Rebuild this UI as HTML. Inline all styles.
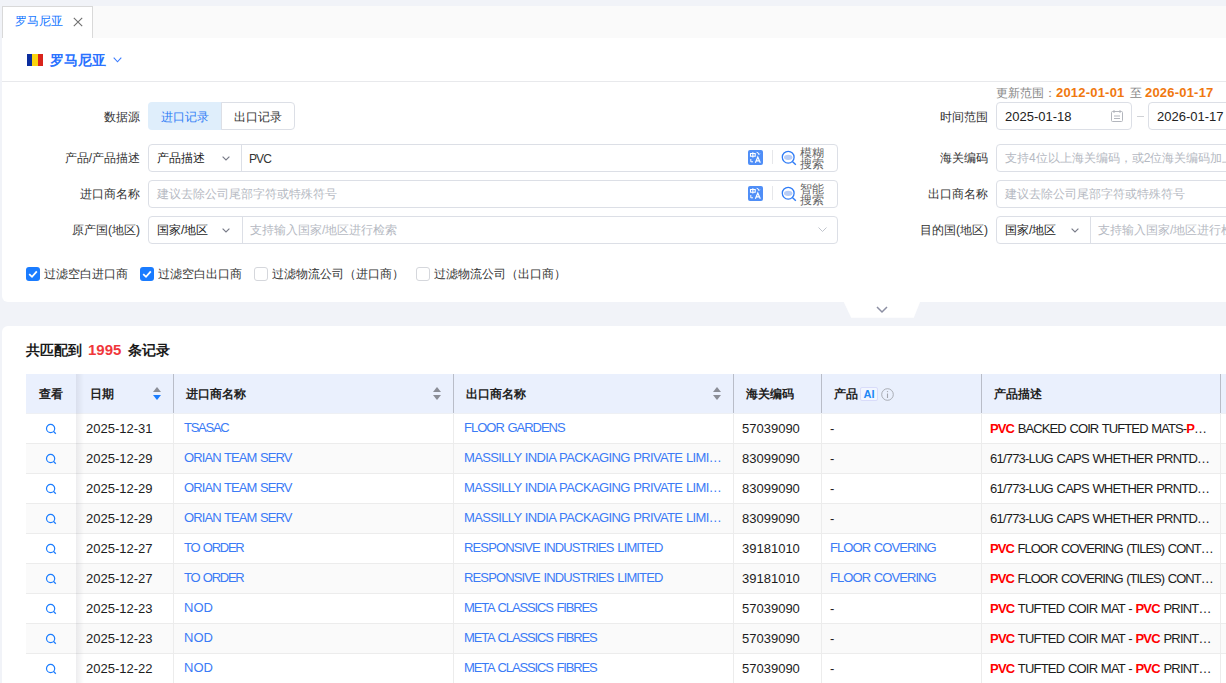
<!DOCTYPE html>
<html><head><meta charset="utf-8">
<style>
*{box-sizing:border-box;margin:0;padding:0}
html,body{width:1226px;height:683px;overflow:hidden;background:#f1f3f8;font-family:"Liberation Sans",sans-serif;font-size:12px;color:#222}
.a{position:absolute;white-space:nowrap}
#tabbar{position:absolute;left:2px;top:6px;width:1224px;height:32px;background:#fafafa}
#tab{position:absolute;left:2px;top:6px;width:91px;height:33px;background:#fff;border:1px solid #d9d9d9;border-bottom:none}
#card1{position:absolute;left:2px;top:38px;width:1230px;height:264px;background:#fff;border-radius:0 0 6px 6px}
#card2{position:absolute;left:2px;top:326px;width:1230px;height:357px;background:#fff;border-radius:6px 6px 0 0}
.lbl{position:absolute;text-align:right;width:120px;font-size:12px;color:#333;line-height:14px}
.box{position:absolute;border:1px solid #dcdfe6;border-radius:4px;background:#fff;height:28px}
.ph{color:#b5b9c2}
.chev{position:absolute;width:7px;height:7px;border-right:1px solid #999;border-bottom:1px solid #999;transform:rotate(45deg)}
.cb{position:absolute;width:14px;height:14px;border-radius:3px;top:267px}
.cb.on{background:#1a7cff}
.cb.off{border:1px solid #d5d7dc;background:#fff}
.chv{width:8px;height:5px}
.cbl{position:absolute;top:266px;font-size:12px;color:#333;line-height:16px}

.th,.tr{position:absolute;left:26px;width:1200px}
.th{top:374px;height:40px;background:#eaf0fd;border-bottom:1px solid #eef0f4}
.tr{height:30px}
.td,.hd{position:absolute;top:0;height:100%;white-space:nowrap;overflow:hidden}
.td{border-bottom:1px solid #ececec;border-right:1px solid #ececec;font-size:13px;line-height:29px;padding-left:10px;color:#1c1c1c}
.hd{height:39px;border-right:1px solid #b9bdc8;font-size:12px;font-weight:bold;line-height:40px;padding-left:12px;color:#222}
.c0{left:0;width:50px}.c1{left:50px;width:98px}.c2{left:148px;width:280px}.c3{left:428px;width:280px}
.c4{left:708px;width:88px}.c5{left:796px;width:160px}.c6{left:956px;width:239px}.c7{left:1195px;width:30px}
.td.c4,.td.c5,.td.c6{padding-left:8px}
.td.c2,.td.c3{line-height:27px}
.td.c5 .lk{position:relative;top:-1px}
.hd.c1{padding-left:14px}
.td.c0{text-align:center;padding:0;padding-top:9px;line-height:12px;border-right:none}
.hd.c0{text-align:center;padding:0;border-right:none}
.lk{color:#3b7bf6}
.r{color:#f00;font-weight:bold}
.shadow{position:absolute;left:76px;top:374px;width:8px;height:309px;background:linear-gradient(to right,rgba(0,0,30,0.07),rgba(0,0,30,0))}
.ai{position:absolute;left:38px;top:13px;width:18px;height:14px;border:1px solid #d9dcfa;border-radius:2px;background:#f2f6ff;font-size:11px;line-height:12px;text-align:center;color:#1e88f5;font-weight:bold}
.info{position:absolute;left:59px;top:14px}
.sort{position:absolute;top:13px;width:8px;height:13px}
</style></head><body>
<div id="tabbar"></div>
<div id="tab"></div>
<div class="a" style="left:15px;top:14px;font-size:12px;color:#1677ff;line-height:14px">罗马尼亚</div>
<svg class="a" style="left:73px;top:17px" width="10" height="10" viewBox="0 0 10 10"><path d="M0.8 0.8L9.2 9.2M9.2 0.8L0.8 9.2" stroke="#6f6f6f" stroke-width="1.1"/></svg>
<div id="card1"></div>
<!-- country header -->
<div class="a" style="left:27px;top:54px;width:16px;height:12px;display:flex">
<div style="width:5.33px;background:#0b2e9e"></div><div style="width:5.34px;background:#f9d40f"></div><div style="width:5.33px;background:#d9241b"></div></div>
<div class="a" style="left:50px;top:51px;font-size:14px;font-weight:bold;color:#2a72ff;line-height:18px">罗马尼亚</div>
<svg class="a" style="left:113px;top:57px" width="9" height="6" viewBox="0 0 9 6"><path d="M0.7 0.7L4.5 4.8L8.3 0.7" fill="none" stroke="#3a7bff" stroke-width="1.1"/></svg>
<div class="a" style="left:2px;top:81px;width:1224px;height:1px;background:#e8e9ec"></div>

<!-- row 1 -->
<div class="lbl" style="left:20px;top:110px">数据源</div>
<div class="a" style="left:148px;top:102px;width:74px;height:28px;background:#dfeefb;border-radius:4px 0 0 4px;color:#2f7df6;text-align:center;line-height:30px;font-size:12px">进口记录</div>
<div class="a" style="left:221px;top:102px;width:74px;height:28px;border:1px solid #dcdfe6;border-radius:0 4px 4px 0;color:#333;text-align:center;line-height:28px;font-size:12px">出口记录</div>

<div class="a" style="left:996px;top:86px;font-size:12px;color:#888;line-height:14px">更新范围：</div>
<div class="a" style="left:1056px;top:85px;font-size:13px;font-weight:bold;color:#f0780f;line-height:16px;letter-spacing:0.2px">2012-01-01</div>
<div class="a" style="left:1130px;top:86px;font-size:12px;color:#888;line-height:14px">至</div>
<div class="a" style="left:1145px;top:85px;font-size:13px;font-weight:bold;color:#f0780f;line-height:16px;letter-spacing:0.2px">2026-01-17</div>
<div class="lbl" style="left:868px;top:110px">时间范围</div>
<div class="box" style="left:996px;top:102px;width:136px"></div>
<div class="a" style="left:1005px;top:109px;font-size:13px;color:#222;line-height:16px">2025-01-18</div>
<svg class="a" style="left:1111px;top:110px" width="12" height="12" viewBox="0 0 12 12"><rect x="0.5" y="1.5" width="11" height="10" rx="1" fill="none" stroke="#b3b6bd"/><path d="M3 0V3M9 0V3M3 6H9M3 8.5H9" stroke="#b3b6bd"/></svg>
<div class="a" style="left:1137px;top:116px;width:7px;height:1px;background:#d0d2d6"></div>
<div class="box" style="left:1148px;top:102px;width:100px"></div>
<div class="a" style="left:1157px;top:109px;font-size:13px;color:#222;line-height:16px">2026-01-17</div>

<!-- row 2 -->
<div class="lbl" style="left:20px;top:151px">产品/产品描述</div>
<div class="box" style="left:148px;top:144px;width:690px"></div>
<div class="a" style="left:241px;top:145px;width:1px;height:26px;background:#dcdfe6"></div>
<div class="a" style="left:157px;top:151px;font-size:12px;line-height:14px">产品描述</div>
<svg class="a chv" style="left:222px;top:156px"><path d="M0.6 0.6L4 4L7.4 0.6" fill="none" stroke="#787b88" stroke-width="1.15"/></svg>
<div class="a" style="left:249px;top:152px;font-size:12px;line-height:14px;color:#333;letter-spacing:-0.9px">PVC</div>
<svg class="a" style="left:748px;top:150px" width="15" height="15" viewBox="0 0 15 15"><rect width="15" height="15" rx="2" fill="#4f8ef7"/><path d="M2.5 3.5H7.2V6.3H2.5Z M4.85 2.2V7.5" fill="none" stroke="#fff" stroke-width="1.1"/><path d="M8.6 2.3Q10.6 2.3 10.9 4.2M10 3.6L10.9 4.6L11.8 3.6" fill="none" stroke="#fff" stroke-width="0.9"/><path d="M2.8 9V11.8H5" fill="none" stroke="#fff" stroke-width="1"/><path d="M7.4 12.8L9.8 7L12.3 12.8M8.3 10.8H11.4" fill="none" stroke="#fff" stroke-width="1.2"/></svg>
<div class="a" style="left:772px;top:150px;width:1px;height:14px;background:#e6e7ea"></div>
<svg class="a" style="left:781px;top:150px" width="16" height="16" viewBox="0 0 16 16"><ellipse cx="7.2" cy="7.3" rx="4.2" ry="2.6" fill="#b7cdf6"/><circle cx="7.2" cy="7.2" r="5.9" fill="none" stroke="#2f7cf6" stroke-width="1.3"/><path d="M11.4 11.4L14.8 14.8" stroke="#2f7cf6" stroke-width="1.4"/></svg>
<div class="a" style="left:800px;top:147.5px;font-size:12px;line-height:11px;color:#666;white-space:normal;width:26px;letter-spacing:0">模糊<br>搜索</div>

<!-- row 3 -->
<div class="lbl" style="left:20px;top:187px">进口商名称</div>
<div class="box" style="left:148px;top:180px;width:690px"></div>
<div class="a ph" style="left:157px;top:187px;font-size:12px;line-height:14px">建议去除公司尾部字符或特殊符号</div>
<svg class="a" style="left:748px;top:186px" width="15" height="15" viewBox="0 0 15 15"><rect width="15" height="15" rx="2" fill="#4f8ef7"/><path d="M2.5 3.5H7.2V6.3H2.5Z M4.85 2.2V7.5" fill="none" stroke="#fff" stroke-width="1.1"/><path d="M8.6 2.3Q10.6 2.3 10.9 4.2M10 3.6L10.9 4.6L11.8 3.6" fill="none" stroke="#fff" stroke-width="0.9"/><path d="M2.8 9V11.8H5" fill="none" stroke="#fff" stroke-width="1"/><path d="M7.4 12.8L9.8 7L12.3 12.8M8.3 10.8H11.4" fill="none" stroke="#fff" stroke-width="1.2"/></svg>
<div class="a" style="left:772px;top:186px;width:1px;height:14px;background:#e6e7ea"></div>
<svg class="a" style="left:781px;top:186px" width="16" height="16" viewBox="0 0 16 16"><ellipse cx="7.2" cy="7.3" rx="4.2" ry="2.6" fill="#b7cdf6"/><circle cx="7.2" cy="7.2" r="5.9" fill="none" stroke="#2f7cf6" stroke-width="1.3"/><path d="M11.4 11.4L14.8 14.8" stroke="#2f7cf6" stroke-width="1.4"/></svg>
<div class="a" style="left:800px;top:183.5px;font-size:12px;line-height:11px;color:#666;white-space:normal;width:26px;letter-spacing:0">智能<br>搜索</div>

<!-- row 4 -->
<div class="lbl" style="left:20px;top:223px">原产国(地区)</div>
<div class="box" style="left:148px;top:216px;width:690px"></div>
<div class="a" style="left:242px;top:217px;width:1px;height:26px;background:#dcdfe6"></div>
<div class="a" style="left:157px;top:223px;font-size:12px;line-height:14px">国家/地区</div>
<svg class="a chv" style="left:222px;top:228px"><path d="M0.6 0.6L4 4L7.4 0.6" fill="none" stroke="#787b88" stroke-width="1.15"/></svg>
<div class="a ph" style="left:250px;top:223px;font-size:12px;line-height:14px">支持输入国家/地区进行检索</div>
<svg class="a" style="left:818px;top:227px" width="9" height="6"><path d="M0.5 0.5L4.5 4.5L8.5 0.5" fill="none" stroke="#c0c4cc"/></svg>

<!-- right rows -->
<div class="lbl" style="left:868px;top:151px">海关编码</div>
<div class="box" style="left:996px;top:144px;width:260px"></div>
<div class="a ph" style="left:1005px;top:151px;font-size:12px;line-height:14px">支持4位以上海关编码，或2位海关编码加上</div>
<div class="lbl" style="left:868px;top:187px">出口商名称</div>
<div class="box" style="left:996px;top:180px;width:260px"></div>
<div class="a ph" style="left:1005px;top:187px;font-size:12px;line-height:14px">建议去除公司尾部字符或特殊符号</div>
<div class="lbl" style="left:868px;top:223px">目的国(地区)</div>
<div class="box" style="left:996px;top:216px;width:260px"></div>
<div class="a" style="left:1090px;top:217px;width:1px;height:26px;background:#dcdfe6"></div>
<div class="a" style="left:1005px;top:223px;font-size:12px;line-height:14px">国家/地区</div>
<svg class="a chv" style="left:1071px;top:228px"><path d="M0.6 0.6L4 4L7.4 0.6" fill="none" stroke="#787b88" stroke-width="1.15"/></svg>
<div class="a ph" style="left:1098px;top:223px;font-size:12px;line-height:14px">支持输入国家/地区进行检索</div>

<!-- checkboxes -->
<div class="cb on" style="left:26px"><svg width="14" height="14"><path d="M3.2 7.2L6 9.8L10.8 4.4" fill="none" stroke="#fff" stroke-width="1.8"/></svg></div>
<div class="cbl" style="left:44px">过滤空白进口商</div>
<div class="cb on" style="left:140px"><svg width="14" height="14"><path d="M3.2 7.2L6 9.8L10.8 4.4" fill="none" stroke="#fff" stroke-width="1.8"/></svg></div>
<div class="cbl" style="left:158px">过滤空白出口商</div>
<div class="cb off" style="left:254px"></div>
<div class="cbl" style="left:272px">过滤物流公司（进口商）</div>
<div class="cb off" style="left:416px"></div>
<div class="cbl" style="left:434px">过滤物流公司（出口商）</div>

<!-- collapse tab -->
<svg class="a" style="left:843px;top:302px" width="78" height="16" viewBox="0 0 78 16"><path d="M0.7 0H77.1L70.8 15.8H8.2Z" fill="#fff"/><path d="M34 5L39 10L44 5" fill="none" stroke="#8c8fa3" stroke-width="1.5"/></svg>

<div id="card2"></div>
<div class="a" style="left:26px;top:342px;font-size:14px;font-weight:bold;line-height:16px;color:#1a1a1a">共匹配到</div>
<div class="a" style="left:88px;top:341px;font-size:15px;font-weight:bold;line-height:18px;color:#f0373b">1995</div>
<div class="a" style="left:128px;top:342px;font-size:14px;font-weight:bold;line-height:16px;color:#1a1a1a">条记录</div>

<div class="th">
<div class="hd c0">查看</div>
<div class="hd c1">日期<svg class="sort" style="left:77px" viewBox="0 0 8 13"><path d="M4 0L8 5H0Z" fill="#8a8d96"/><path d="M0 8H8L4 13Z" fill="#1a7cff"/></svg></div>
<div class="hd c2">进口商名称<svg class="sort" style="left:259px" viewBox="0 0 8 13"><path d="M4 0L8 5H0Z" fill="#8a8d96"/><path d="M0 8H8L4 13Z" fill="#8a8d96"/></svg></div>
<div class="hd c3">出口商名称<svg class="sort" style="left:259px" viewBox="0 0 8 13"><path d="M4 0L8 5H0Z" fill="#8a8d96"/><path d="M0 8H8L4 13Z" fill="#8a8d96"/></svg></div>
<div class="hd c4">海关编码</div>
<div class="hd c5">产品<span class="ai">AI</span><svg class="info" width="13" height="13" viewBox="0 0 13 13"><circle cx="6.5" cy="6.5" r="5.8" fill="none" stroke="#a3a6ad" stroke-width="0.9"/><path d="M6.5 5.5V10" stroke="#a3a6ad" stroke-width="1.1"/><circle cx="6.5" cy="3.6" r="0.7" fill="#a3a6ad"/></svg></div>
<div class="hd c6">产品描述</div>
<div class="hd c7" style="border-right:none"></div>
</div>
<div class="tr" style="top:414px;background:#fff"><div class="td c0"><svg width="12" height="12" viewBox="0 0 12 12"><circle cx="5.6" cy="5.5" r="4.1" fill="none" stroke="#1a7cff" stroke-width="1.2"/><path d="M8.5 8.4L10.8 10.7" stroke="#1a7cff" stroke-width="1.3"/></svg></div><div class="td c1"><span>2025-12-31</span></div><div class="td c2 lk"><span style="letter-spacing:-1.26px;word-spacing:1.26px">TSASAC</span></div><div class="td c3 lk"><span style="letter-spacing:-1.0px;word-spacing:1.0px">FLOOR GARDENS</span></div><div class="td c4"><span>57039090</span></div><div class="td c5">-</div><div class="td c6"><span style="letter-spacing:-0.89px;word-spacing:0.89px"><b class="r">PVC</b> BACKED COIR TUFTED MATS-<b class="r">P</b>…</span></div><div class="td c7"></div></div>
<div class="tr" style="top:444px;background:#fafafa"><div class="td c0"><svg width="12" height="12" viewBox="0 0 12 12"><circle cx="5.6" cy="5.5" r="4.1" fill="none" stroke="#1a7cff" stroke-width="1.2"/><path d="M8.5 8.4L10.8 10.7" stroke="#1a7cff" stroke-width="1.3"/></svg></div><div class="td c1"><span>2025-12-29</span></div><div class="td c2 lk"><span style="letter-spacing:-0.91px;word-spacing:0.91px">ORIAN TEAM SERV</span></div><div class="td c3 lk"><span style="letter-spacing:-0.65px;word-spacing:0.65px">MASSILLY INDIA PACKAGING PRIVATE LIMI…</span></div><div class="td c4"><span>83099090</span></div><div class="td c5">-</div><div class="td c6"><span style="letter-spacing:-0.79px;word-spacing:0.79px">61/773-LUG CAPS WHETHER PRNTD…</span></div><div class="td c7"></div></div>
<div class="tr" style="top:474px;background:#fff"><div class="td c0"><svg width="12" height="12" viewBox="0 0 12 12"><circle cx="5.6" cy="5.5" r="4.1" fill="none" stroke="#1a7cff" stroke-width="1.2"/><path d="M8.5 8.4L10.8 10.7" stroke="#1a7cff" stroke-width="1.3"/></svg></div><div class="td c1"><span>2025-12-29</span></div><div class="td c2 lk"><span style="letter-spacing:-0.91px;word-spacing:0.91px">ORIAN TEAM SERV</span></div><div class="td c3 lk"><span style="letter-spacing:-0.65px;word-spacing:0.65px">MASSILLY INDIA PACKAGING PRIVATE LIMI…</span></div><div class="td c4"><span>83099090</span></div><div class="td c5">-</div><div class="td c6"><span style="letter-spacing:-0.79px;word-spacing:0.79px">61/773-LUG CAPS WHETHER PRNTD…</span></div><div class="td c7"></div></div>
<div class="tr" style="top:504px;background:#fafafa"><div class="td c0"><svg width="12" height="12" viewBox="0 0 12 12"><circle cx="5.6" cy="5.5" r="4.1" fill="none" stroke="#1a7cff" stroke-width="1.2"/><path d="M8.5 8.4L10.8 10.7" stroke="#1a7cff" stroke-width="1.3"/></svg></div><div class="td c1"><span>2025-12-29</span></div><div class="td c2 lk"><span style="letter-spacing:-0.91px;word-spacing:0.91px">ORIAN TEAM SERV</span></div><div class="td c3 lk"><span style="letter-spacing:-0.65px;word-spacing:0.65px">MASSILLY INDIA PACKAGING PRIVATE LIMI…</span></div><div class="td c4"><span>83099090</span></div><div class="td c5">-</div><div class="td c6"><span style="letter-spacing:-0.79px;word-spacing:0.79px">61/773-LUG CAPS WHETHER PRNTD…</span></div><div class="td c7"></div></div>
<div class="tr" style="top:534px;background:#fff"><div class="td c0"><svg width="12" height="12" viewBox="0 0 12 12"><circle cx="5.6" cy="5.5" r="4.1" fill="none" stroke="#1a7cff" stroke-width="1.2"/><path d="M8.5 8.4L10.8 10.7" stroke="#1a7cff" stroke-width="1.3"/></svg></div><div class="td c1"><span>2025-12-27</span></div><div class="td c2 lk"><span style="letter-spacing:-1.28px;word-spacing:1.28px">TO ORDER</span></div><div class="td c3 lk"><span style="letter-spacing:-0.86px;word-spacing:0.86px">RESPONSIVE INDUSTRIES LIMITED</span></div><div class="td c4"><span>39181010</span></div><div class="td c5"><span class="lk"><span style="letter-spacing:-0.92px;word-spacing:0.92px">FLOOR COVERING</span></span></div><div class="td c6"><span style="letter-spacing:-0.97px;word-spacing:0.97px"><b class="r">PVC</b> FLOOR COVERING (TILES) CONT…</span></div><div class="td c7"></div></div>
<div class="tr" style="top:564px;background:#fafafa"><div class="td c0"><svg width="12" height="12" viewBox="0 0 12 12"><circle cx="5.6" cy="5.5" r="4.1" fill="none" stroke="#1a7cff" stroke-width="1.2"/><path d="M8.5 8.4L10.8 10.7" stroke="#1a7cff" stroke-width="1.3"/></svg></div><div class="td c1"><span>2025-12-27</span></div><div class="td c2 lk"><span style="letter-spacing:-1.28px;word-spacing:1.28px">TO ORDER</span></div><div class="td c3 lk"><span style="letter-spacing:-0.86px;word-spacing:0.86px">RESPONSIVE INDUSTRIES LIMITED</span></div><div class="td c4"><span>39181010</span></div><div class="td c5"><span class="lk"><span style="letter-spacing:-0.92px;word-spacing:0.92px">FLOOR COVERING</span></span></div><div class="td c6"><span style="letter-spacing:-0.97px;word-spacing:0.97px"><b class="r">PVC</b> FLOOR COVERING (TILES) CONT…</span></div><div class="td c7"></div></div>
<div class="tr" style="top:594px;background:#fff"><div class="td c0"><svg width="12" height="12" viewBox="0 0 12 12"><circle cx="5.6" cy="5.5" r="4.1" fill="none" stroke="#1a7cff" stroke-width="1.2"/><path d="M8.5 8.4L10.8 10.7" stroke="#1a7cff" stroke-width="1.3"/></svg></div><div class="td c1"><span>2025-12-23</span></div><div class="td c2 lk"><span style="letter-spacing:0px;word-spacing:0px">NOD</span></div><div class="td c3 lk"><span style="letter-spacing:-1.13px;word-spacing:1.13px">META CLASSICS FIBRES</span></div><div class="td c4"><span>57039090</span></div><div class="td c5">-</div><div class="td c6"><span style="letter-spacing:-0.79px;word-spacing:0.79px"><b class="r">PVC</b> TUFTED COIR MAT - <b class="r">PVC</b> PRINT…</span></div><div class="td c7"></div></div>
<div class="tr" style="top:624px;background:#fafafa"><div class="td c0"><svg width="12" height="12" viewBox="0 0 12 12"><circle cx="5.6" cy="5.5" r="4.1" fill="none" stroke="#1a7cff" stroke-width="1.2"/><path d="M8.5 8.4L10.8 10.7" stroke="#1a7cff" stroke-width="1.3"/></svg></div><div class="td c1"><span>2025-12-23</span></div><div class="td c2 lk"><span style="letter-spacing:0px;word-spacing:0px">NOD</span></div><div class="td c3 lk"><span style="letter-spacing:-1.13px;word-spacing:1.13px">META CLASSICS FIBRES</span></div><div class="td c4"><span>57039090</span></div><div class="td c5">-</div><div class="td c6"><span style="letter-spacing:-0.79px;word-spacing:0.79px"><b class="r">PVC</b> TUFTED COIR MAT - <b class="r">PVC</b> PRINT…</span></div><div class="td c7"></div></div>
<div class="tr" style="top:654px;background:#fff"><div class="td c0"><svg width="12" height="12" viewBox="0 0 12 12"><circle cx="5.6" cy="5.5" r="4.1" fill="none" stroke="#1a7cff" stroke-width="1.2"/><path d="M8.5 8.4L10.8 10.7" stroke="#1a7cff" stroke-width="1.3"/></svg></div><div class="td c1"><span>2025-12-22</span></div><div class="td c2 lk"><span style="letter-spacing:0px;word-spacing:0px">NOD</span></div><div class="td c3 lk"><span style="letter-spacing:-1.13px;word-spacing:1.13px">META CLASSICS FIBRES</span></div><div class="td c4"><span>57039090</span></div><div class="td c5">-</div><div class="td c6"><span style="letter-spacing:-0.79px;word-spacing:0.79px"><b class="r">PVC</b> TUFTED COIR MAT - <b class="r">PVC</b> PRINT…</span></div><div class="td c7"></div></div>
<div class="shadow"></div>
</body></html>
